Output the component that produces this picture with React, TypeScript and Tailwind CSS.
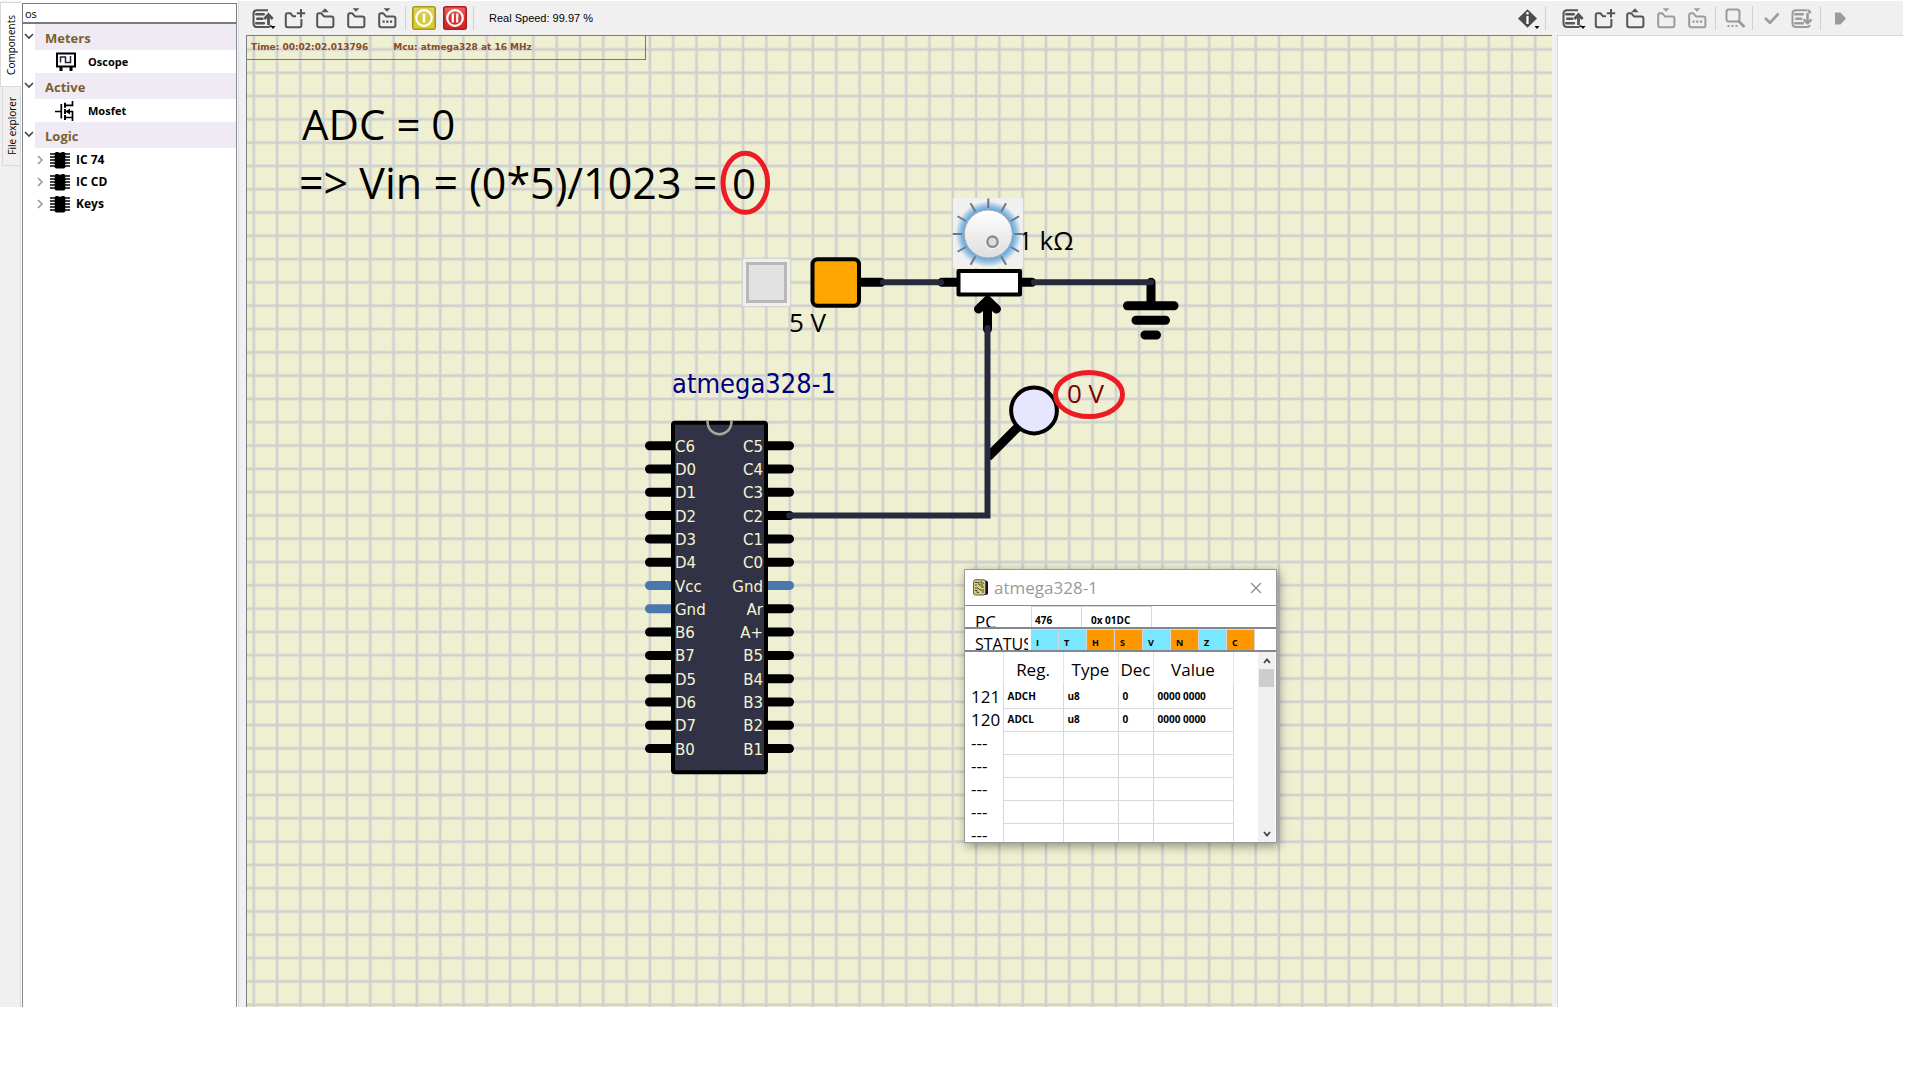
import { useState, type ReactNode } from "react";

const UI = "font-['Open_Sans','Noto_Sans',sans-serif]";

/* ---------- toolbar ---------- */

function ToolButton({ label, muted, children }: { label: string; muted?: boolean; children: ReactNode }) {
  return (
    <button type="button" aria-label={label} title={label} disabled={muted} className={muted ? "text-[#9b9b9b]" : "text-[#555555]"}>
      <svg width="31" height="34" viewBox="0 0 31 34" fill="none" stroke="currentColor" strokeWidth="2" strokeLinejoin="round" className="block">
        {children}
      </svg>
    </button>
  );
}

function Separator() {
  return <div className="mx-[2px] my-[5px] w-px shrink-0 border-l border-[#d0d0d0] pr-px" />;
}

function Recent({ down }: { down?: boolean }) {
  return (
    <>
      <path d="M20 9.2H9C6.500 9.2 5.500 10.5 5.500 12.7V22.3C5.500 24.8 6.500 26 9 26H20C21.6 26 22.6 25.3 23 24" />
      <path d="M8.3 13.2h7.4M9.3 17.7h5M8.3 22.3h7.6" strokeWidth="2.6" strokeLinecap="round" />
      {down ? (
        <path d="M20.5 12v10M16.6 18.4l3.9 4 3.9-4M20.5 9.4c2 .2 2.5 1.3 2.5 3" strokeWidth="2.5" />
      ) : (
        <path d="M20.5 24V13.6M16.4 18l4.1-4.4 4.1 4.4" strokeWidth="2.8" strokeLinejoin="miter" />
      )}
    </>
  );
}

const DropMark = () => <path d="M22.5 25h5L25 28z" fill="#000" stroke="none" />;

const Folder = () => (
  <path d="M7.2 14.2C7.2 13 7.9 12.3 9 12.3H11.3L14 15.4H21.4C22.7 15.4 23.4 16 23.4 17.2V24.2C23.4 25.5 22.7 26.2 21.4 26.2H9.2C7.9 26.2 7.2 25.5 7.2 24.2Z" />
);
const FolderNew = () => (
  <>
    <path d="M17 15.2H13.8L11.6 12.3H8.6C7.4 12.3 6.8 13 6.8 14.2V24.2C6.8 25.5 7.4 26.2 8.7 26.2H20.4C21.7 26.2 22.4 25.5 22.4 24.2V18" />
    <path d="M22 8v8.4M17.8 12.2h8.4" />
  </>
);
const FolderOpen = () => (
  <>
    <Folder />
    <path d="M11.3 11.3L15 7.2L18.7 11.3Z" fill="currentColor" stroke="none" />
  </>
);
const DownMark = () => <path d="M11.6 7.2H18.4L15 10.8Z" fill="currentColor" stroke="none" />;
const Dots = ({ y }: { y: number }) => (
  <path d={`M10.5 ${y}h2.2M14.2 ${y}h2.2M17.9 ${y}h2.2`} strokeWidth="2.2" />
);

function FileButtons({ muted }: { muted?: boolean }) {
  return (
    <>
      <ToolButton label="Last files"><Recent /><DropMark /></ToolButton>
      <ToolButton label="New"><FolderNew /></ToolButton>
      <ToolButton label="Open"><FolderOpen /></ToolButton>
      <ToolButton label="Save" muted={muted}><Folder /><DownMark /></ToolButton>
      <ToolButton label="Save as" muted={muted}><Folder /><DownMark /><Dots y={20.7} /></ToolButton>
    </>
  );
}

function RoundButton({ label, kind }: { label: string; kind: "power" | "pause" }) {
  const red = kind === "pause";
  return (
    <button type="button" aria-label={label} title={label} className="flex w-[31px] items-center pl-[3px]">
      <svg width="24" height="24" viewBox="0 0 24 24">
        <defs>
          <linearGradient id={kind} x1="0" y1="0" x2="0" y2="1">
            <stop offset="0" stopColor={red ? "#e86a6a" : "#dcd473"} />
            <stop offset="0.5" stopColor={red ? "#dc3434" : "#d6ca3c"} />
            <stop offset="1" stopColor={red ? "#d42222" : "#dccb28"} />
          </linearGradient>
        </defs>
        <rect x="0.8" y="0.8" width="22.4" height="22.4" rx="2" fill={`url(#${kind})`} stroke={red ? "#b01c1c" : "#a89a10"} strokeWidth="1.6" />
        <circle cx="12" cy="12" r="7.8" fill="none" stroke="#fff" strokeWidth="2.2" />
        {red ? <path d="M9.8 7.5v9M14.2 7.5v9" stroke="#fff" strokeWidth="2.2" /> : <path d="M12 7.5v9" stroke="#fff" strokeWidth="2.6" />}
      </svg>
    </button>
  );
}

/* ---------- component tree ---------- */

function ScopeIcon() {
  return (
    <svg width="20" height="20" viewBox="0 0 20 20" fill="none" stroke="#000">
      <rect x="1" y="1.5" width="18" height="13" strokeWidth="2" />
      <path d="M4.5 10.5V5H9.5V10.5H14.5V4" stroke="#22223c" strokeWidth="1.5" />
      <path d="M5 15v4M15 15v4" strokeWidth="3" />
    </svg>
  );
}
function MosfetIcon() {
  return (
    <svg width="20" height="20" viewBox="0 0 20 20" fill="none" stroke="#000" className="-ml-px">
      <path d="M0 10.5H6M6.3 3v14.5" strokeWidth="1.7" />
      <path d="M10 1.8v5M10 8v5M10 14v5" strokeWidth="2" />
      <path d="M10 4.300H17.5V0M10 10.5H17.5V20M10 16.5H17.5" strokeWidth="1.7" />
      <path d="M10.500 10.5l4.5-3v6z" fill="#000" stroke="none" />
    </svg>
  );
}
function ChipIcon() {
  return (
    <svg width="20" height="18" viewBox="0 0 20 18">
      <path d="M0 3h20M0 6h20M0 9h20M0 12h20M0 15h20" stroke="#000" strokeWidth="1.6" />
      <path d="M6 1h2l1 .8h2L12 1h2l1.300 1v14.500L14 17.500H6L4.700 16.500V2z" fill="#000" />
    </svg>
  );
}

function Group({ name, item, icon }: { name: string; item?: string; icon?: ReactNode }) {
  return (
    <li>
      <div className="flex h-[26px]">
        <button type="button" aria-label={`Collapse ${name}`} className="flex w-3 justify-center pt-[9px]">
          <svg width="10" height="7" viewBox="0 0 10 7" fill="none" stroke="#444" strokeWidth="1.6"><path d="M1 1l4 4 4-4" /></svg>
        </button>
        <div className="flex flex-1 items-center bg-[#f0eaf5] pt-[3px] pl-[10px] text-[13px] font-bold text-[#7a6030]">{name}</div>
      </div>
      {item && (
        <div className="flex h-[23px] items-center pt-px pl-[33px] text-[11px] font-bold text-black">
          <span className="w-8">{icon}</span>
          {item}
        </div>
      )}
    </li>
  );
}

function Sidebar() {
  const [query, setQuery] = useState("os");
  return (
    <aside className={`flex w-[246px] shrink-0 bg-[#f0f0f0] ${UI}`}>
      <div role="tablist" aria-orientation="vertical" className="flex w-[21px] flex-col border-r border-[#d9d9d9] text-[10px] leading-4 text-black">
        <button role="tab" aria-selected="true" type="button" className="mt-px -mr-px flex h-[85px] items-center justify-center border-y border-l border-[#d9d9d9] bg-white">
          <span className="rotate-180 [writing-mode:vertical-rl]">Components</span>
        </button>
        <button role="tab" aria-selected="false" type="button" className="ml-[2px] flex h-[79px] items-center justify-center border-b border-l border-[#d9d9d9]">
          <span className="rotate-180 [writing-mode:vertical-rl]">File explorer</span>
        </button>
      </div>
      <div className="flex w-[218px] flex-col border-r border-[#d9d9d9] bg-white pt-[2px] pr-px pl-px">
        <input
          aria-label="Search components"
          value={query}
          onChange={(e) => setQuery(e.target.value)}
          className="h-[21px] w-full border border-b-2 border-[#7a7a7a] bg-white px-[2px] text-[11px] text-black outline-none"
        />
        <ul className="flex-1 border-x border-[#828790]">
          <Group name="Meters" item="Oscope" icon={<ScopeIcon />} />
          <Group name="Active" item="Mosfet" icon={<MosfetIcon />} />
          <Group name="Logic" />
          {["IC 74", "IC CD", "Keys"].map((n) => (
            <li key={n} className="flex h-[22px] items-center pt-[2px] pl-[14px] text-[12px] font-bold text-black">
              <svg width="7" height="10" viewBox="0 0 7 10" fill="none" stroke="#9a9a9a" strokeWidth="1.6"><path d="M1 1l4 4-4 4" /></svg>
              <span className="mr-[6px] ml-[6px]"><ChipIcon /></span>
              {n}
            </li>
          ))}
        </ul>
      </div>
    </aside>
  );
}

/* ---------- circuit ---------- */

const LEFT = ["C6", "D0", "D1", "D2", "D3", "D4", "Vcc", "Gnd", "B6", "B7", "D5", "D6", "D7", "B0"];
const RIGHT = ["C5", "C4", "C3", "C2", "C1", "C0", "Gnd", "Ar", "A+", "B5", "B4", "B3", "B2", "B1"];
const TICKS = [-150, -120, -90, -60, -30, 0, 30, 60, 90, 120, 150];
const pinY = (i: number) => 445.7 + i * 23.3;

function Circuit() {
  return (
    <svg className="absolute inset-0 size-full" role="img" aria-label="Circuit">
      <defs>
        <pattern id="grid" x="242.2" y="37.9" width="23.3" height="23.3" patternUnits="userSpaceOnUse">
          <rect width="23.3" height="23.3" fill="#efefd2" />
          <path d="M11.6 0V23.3M0 11.6H23.3" stroke="#d0d0d0" strokeWidth="2.600" />
        </pattern>
        <radialGradient id="glow">
          <stop offset="0.7" stopColor="#5a9fd4" />
          <stop offset="0.84" stopColor="#8fbfe4" />
          <stop offset="1" stopColor="#efefef" />
        </radialGradient>
        <linearGradient id="knob" x1="0" y1="0" x2="0" y2="1">
          <stop offset="0" stopColor="#ffffff" />
          <stop offset="1" stopColor="#dedede" />
        </linearGradient>
      </defs>
      <g transform="translate(-247 -36)">
        <rect x="247" y="36" width="100%" height="100%" fill="url(#grid)" />

        <g className="font-['Open_Sans',sans-serif]" fill="#000">
          <text x="302" y="140" className="text-[42px]">ADC = 0</text>
          <text x="299" y="199" className="text-[43px]">=&gt; Vin = (0*5)/1023 =</text>
          <text x="732" y="199" className="text-[42px]">0</text>
        </g>

        <g className="font-['Open_Sans',sans-serif] text-[26px]">
          <text x="789" y="332">5 V</text>
          <text x="1018" y="250">1 kΩ</text>
          <text x="1067" y="403" fill="#800000">0 V</text>
        </g>

        <g stroke="#000" strokeWidth="9" strokeLinecap="round" fill="none">
          <path d="M862 282.300H881M942 282.300H958M1022 282.300H1032M1151 282.300V304" />
          <path d="M1127.500 305.700H1174M1136 320.300H1165.500M1145 335H1156.500" />
          <path d="M987.500 301V329M978.500 309L987.500 300.500L996.500 309" />
          <path d="M1018 427L988 457" strokeLinecap="butt" />
        </g>
        <rect x="812.500" y="259.300" width="46.500" height="46.500" rx="5" fill="#ffa500" stroke="#000" strokeWidth="4" />
        <rect x="958.500" y="271" width="61.500" height="23.500" fill="#fff" stroke="#000" strokeWidth="4" strokeLinejoin="round" />
        <circle cx="1034" cy="410.500" r="22.900" fill="#e6e6ff" stroke="#000" strokeWidth="4" />

        <rect x="953" y="198" width="70" height="70" fill="#f0f0f0" />
        <circle cx="988.300" cy="234" r="33" fill="url(#glow)" />
        {TICKS.map((a) => (
          <path key={a} d="M988.300 208V198.500" stroke="#6a7684" strokeWidth="2" transform={`rotate(${a} 988.3 234)`} />
        ))}
        <circle cx="988.300" cy="234" r="24" fill="url(#knob)" stroke="#a5acb4" strokeWidth="1" />
        <circle cx="992.500" cy="241.700" r="7.500" fill="#f2f2f2" />
        <circle cx="992.500" cy="241.700" r="5.200" fill="#dcdcdc" stroke="#8c8c8c" strokeWidth="2.400" />

        {LEFT.map((n, i) => (
          <path key={i} d={`M649.500 ${pinY(i)}H672`} stroke={n === "Vcc" || n === "Gnd" ? "#4a78ad" : "#000"} strokeWidth="9" strokeLinecap="round" />
        ))}
        {RIGHT.map((n, i) => (
          <path key={i} d={`M767 ${pinY(i)}H789.500`} stroke={n === "Gnd" ? "#4a78ad" : "#000"} strokeWidth="9" strokeLinecap="round" />
        ))}
        <rect x="673" y="422.700" width="93" height="349.500" rx="2" fill="#323246" stroke="#000" strokeWidth="4" />
        <path d="M707.500 421C707.500 438.500 731.500 438.500 731.500 421" fill="none" stroke="#a8a89c" strokeWidth="2.500" />
        <g className="font-['DejaVu_Sans',Verdana,sans-serif] text-[15px]" fill="#f5f5d0">
          {LEFT.map((n, i) => (
            <text key={i} x="675" y={pinY(i) + 6}>{n}</text>
          ))}
          {RIGHT.map((n, i) => (
            <text key={i} x="763" y={pinY(i) + 6} textAnchor="end">{n}</text>
          ))}
        </g>
        <text x="672" y="393" fill="#000080" className="font-['DejaVu_Sans_Condensed','Noto_Sans',sans-serif] text-[27px]">atmega328-1</text>

        <g stroke="#28283e" strokeWidth="6" strokeLinecap="round" fill="none">
          <path d="M883 282.300H941M1034 282.300H1151M987.500 328V515.500H789" />
        </g>

        <g fill="none" stroke="#ed1c24" strokeWidth="5">
          <ellipse cx="745.300" cy="182.800" rx="22.300" ry="29.500" />
          <ellipse cx="1089" cy="394.500" rx="33.500" ry="22" />
        </g>
      </g>
    </svg>
  );
}

/* ---------- register window ---------- */

const FLAGS: [string, boolean][] = [["I", false], ["T", false], ["H", true], ["S", true], ["V", false], ["N", true], ["Z", false], ["C", true]];
const ROWS = [
  ["121", "ADCH", "u8", "0", "0000 0000"],
  ["120", "ADCL", "u8", "0", "0000 0000"],
  ...Array.from({ length: 5 }, () => ["---", "", "", "", ""]),
];

function RegisterWindow() {
  return (
    <section aria-label="atmega328-1" className={`absolute top-[533px] left-[717px] flex h-[274px] w-[313px] flex-col border border-[#9a9a9a] bg-white text-black shadow-[2px_3px_10px_rgba(0,0,0,0.4)] ${UI}`}>
      <header className="flex h-[35px] shrink-0 items-center pr-[14px] pl-2">
        <svg width="16" height="17" viewBox="0 0 16 17">
          <rect x="4" y="1.500" width="11" height="14.500" rx="2.500" fill="#10103c" />
          <rect x="0.600" y="0.800" width="12" height="15.200" rx="2" fill="#d8d080" stroke="#4a4830" strokeWidth="0.900" />
          <path d="M2 3.500h4v2.500h4M2 6h2M8 2v2h3M2 9h3l2 2h4M2 11.500h2v2h2M8 8h3M9 13h2" stroke="#4a4830" fill="none" />
        </svg>
        <h2 className="ml-[5px] flex-1 text-[17px] text-[#999999]">atmega328-1</h2>
        <button type="button" aria-label="Close">
          <svg width="12" height="12" viewBox="0 0 12 12" stroke="#888" strokeWidth="1.100"><path d="M1 1l10 10M11 1L1 11" /></svg>
        </button>
      </header>
      <div className="flex h-[22px] shrink-0 overflow-hidden border-t border-[#828790] text-[10px] font-bold">
        <div className="w-[66px] pt-[4px] pl-[10px] text-[17px] leading-6 font-normal">PC</div>
        <div className="w-[50px] border-t border-l border-[#d8d8d8] pt-[6px] pl-[3px]">476</div>
        <div className="w-[71px] border-x border-t border-[#d8d8d8] pt-[6px] pl-[9px]">0x 01DC</div>
      </div>
      <div className="flex h-[23px] shrink-0 overflow-hidden border-t-2 border-[#828790] text-[9px] font-bold">
        <div className="w-[66px] shrink-0 overflow-hidden pt-[3px] pr-[3px] pl-[10px]">
          <div className="overflow-hidden text-[16px] leading-6 font-normal">STATUS</div>
        </div>
        {FLAGS.map(([name, on]) => (
          <div key={name} className={`w-7 border-t border-r border-[#d8d8d8] pt-[6px] pl-[5px] ${on ? "bg-[#ff9800]" : "bg-[#7ae6ff]"}`}>{name}</div>
        ))}
      </div>
      <div className="flex min-h-0 flex-1 border-t-2 border-[#828790]">
        <div className="min-h-0 flex-1 overflow-hidden">
          <table className="table-fixed border-collapse text-[10px] font-bold">
            <colgroup>
              <col className="w-[38px]" /><col className="w-[60px]" /><col className="w-[55px]" /><col className="w-[35px]" /><col className="w-[80px]" />
            </colgroup>
            <thead>
              <tr className="h-[33px] text-[17px] leading-6">
                <td />
                {["Reg.", "Type", "Dec", "Value"].map((h) => (
                  <th key={h} scope="col" className="border-x border-[#e4e4e4] p-0 pt-[2px] text-center font-normal">{h}</th>
                ))}
              </tr>
            </thead>
            <tbody>
              {ROWS.map((r, i) => (
                <tr key={i} className="h-[23px]">
                  <th scope="row" className="p-0 pl-[6px] text-left text-[17px] leading-[22px] font-normal">{r[0]}</th>
                  {r.slice(1).map((c, j) => (
                    <td key={j} className="border-x border-b border-[#d8d8d8] p-0 pl-1">{c}</td>
                  ))}
                </tr>
              ))}
            </tbody>
          </table>
        </div>
        <div className="mr-px flex w-[17px] flex-col items-center bg-[#f0f0f0]">
          <button type="button" aria-label="Scroll up" className="flex h-[17px] w-full items-center justify-center">
            <svg width="8" height="6" viewBox="0 0 8 6" fill="none" stroke="#444" strokeWidth="1.800"><path d="M1 5l3-3.500L7 5" /></svg>
          </button>
          <div className="h-[18px] w-[15px] bg-[#cdcdcd]" />
          <div className="flex-1" />
          <button type="button" aria-label="Scroll down" className="flex h-[17px] w-full items-center justify-center">
            <svg width="8" height="6" viewBox="0 0 8 6" fill="none" stroke="#444" strokeWidth="1.800"><path d="M1 1l3 3.500L7 1" /></svg>
          </button>
        </div>
      </div>
    </section>
  );
}

export default function App() {
  return (
    <div className="flex h-screen bg-white pt-px pr-[17px] pb-[69px]">
      <Sidebar />
      <main className="flex min-w-0 flex-1 flex-col bg-[#f0f0f0]">
        <div className="flex h-[34px] shrink-0 pl-[2px]">
          <FileButtons />
          <Separator />
          <RoundButton label="Power circuit" kind="power" />
          <RoundButton label="Pause simulation" kind="pause" />
          <Separator />
          <span className="ml-3 flex items-center font-['Liberation_Sans',Arial,sans-serif] text-[11px] text-black">Real Speed: 99.97 %</span>
          <div className="flex-1" />
          <ToolButton label="Info">
            <path d="M15.500 8.200L25 17.500L15.500 26.800L6 17.500Z" fill="#4c4c4c" stroke="none" />
            <path d="M15.500 11v2.600M15.500 15v8" stroke="#fff" strokeWidth="2.200" />
            <DropMark />
          </ToolButton>
          <Separator />
          <div className="w-[8px]" />
        </div>
        <div className="relative mr-[5px] flex-1 overflow-hidden border-t border-l border-[#7c7c84]">
          <Circuit />
          <div className="relative flex h-[24px] w-[399px] gap-[25px] border-r border-b border-[#777777] pl-1 font-['DejaVu_Sans',Verdana,sans-serif] text-[9px] leading-[22px] font-bold text-[#8b4a2b]">
            <span>Time: 00:02:02.013796</span>
            <span>Mcu: atmega328 at 16 MHz</span>
          </div>
          <button type="button" aria-label="Voltage source switch" className="absolute top-[223px] left-[496px] size-[47px] border-3 border-[#efefef] bg-[#efefef]">
            <span className="block size-full border-3 border-[#b8b8b8] bg-[#e1e1e1]" />
          </button>
          <RegisterWindow />
        </div>
      </main>
      <aside className="flex w-[346px] shrink-0 flex-col">
        <div className="flex h-[34px] shrink-0 bg-[#f0f0f0] pl-px">
          <FileButtons muted />
          <Separator />
          <ToolButton label="Find" muted>
            <path d="M9.500 8.500h8.500c1.500 0 2.500 1 2.500 2.500v7c0 1.500-1 2.500-2.500 2.500H10c-1.500 0-2.500-1-2.500-2.500v-7c0-1.500.7-2.500 2-2.500z" />
            <path d="M19.500 20l6 6" strokeWidth="2.800" />
            <path d="M8.500 25h2M12.500 25h2M16.500 25h2" />
          </ToolButton>
          <Separator />
          <ToolButton label="Compile" muted><path d="M9 17l5 4.800 8.500-9.300" strokeWidth="2.600" /></ToolButton>
          <ToolButton label="Load firmware" muted><Recent down /></ToolButton>
          <Separator />
          <ToolButton label="Debug" muted><path d="M11 11.500h5.500l5.500 6-5.500 6H11z" fill="currentColor" stroke="none" /></ToolButton>
        </div>
        <div className="flex-1 border-t border-l border-[#d8d8d8] bg-white" />
      </aside>
    </div>
  );
}
